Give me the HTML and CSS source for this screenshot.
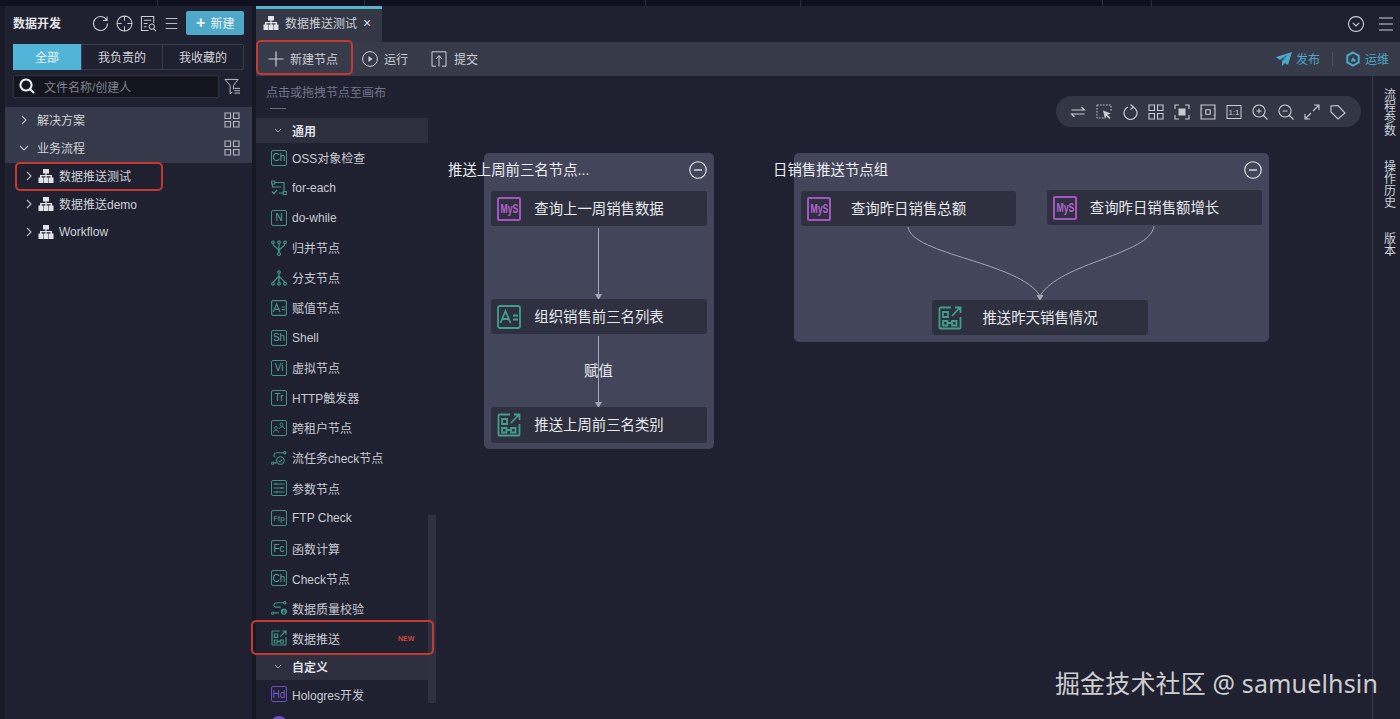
FILE: index.html
```html
<!DOCTYPE html>
<html lang="en">
<head>
  <meta charset="UTF-8" />
  <title>数据开发</title>
  <link rel="stylesheet" href="styles.css">
</head>
<body>

  <svg class="defs" width="0" height="0">
    <symbol id="i-flow" viewBox="0 0 16 16">
      <path fill="currentColor" d="M5 1h6v4.500H8.600V7H14v2.500h1.500V15h-5V9.500h2V8.300H8.600v1.200H10V15H6V9.500h1.400V8.300H3.500v1.200h2V15h-5V9.500H2V7h5.400V5.500H5z"/>
    </symbol>
    <symbol id="i-grid" viewBox="0 0 16 16">
      <path fill="none" stroke="currentColor" stroke-width="1.100" d="M1 1h5.500v5.500H1zM9.500 1H15v5.500H9.500zM1 9.500h5.500V15H1zM9.500 9.500H15V15H9.500z"/>
    </symbol>
    <symbol id="i-chev" viewBox="0 0 8 12">
      <path fill="none" stroke="currentColor" stroke-width="1.100" d="M2 2l4 4-4 4"/>
    </symbol>
    <symbol id="i-push" viewBox="0 0 24 24">
      <path fill="none" stroke="currentColor" stroke-width="1.800" d="M13 1.500H2.500a1 1 0 0 0-1 1v19a1 1 0 0 0 1 1h19a1 1 0 0 0 1-1V11M14 10l8-8.500M17 1.500h5.500V7M5 6h5v5H5zM5 15h4.500v4.500H5zM14 15h4.500v4.500H14zM9.500 17H14"/>
    </symbol>
    <symbol id="i-assign" viewBox="0 0 24 24">
      <rect x="1" y="1" width="22" height="22" rx="2" fill="none" stroke="currentColor" stroke-width="1.800"/>
      <path fill="none" stroke="currentColor" stroke-width="1.800" d="M3.500 18L8.500 6l5 12M5.200 14h6.600M16 10.500h5M16 14.500h5"/>
    </symbol>
    <symbol id="i-foreach" viewBox="0 0 16 16">
      <path fill="none" stroke="currentColor" stroke-width="1.200" d="M.7 1h3v3h-3zM12.300 11.500h3v3h-3zM3.700 2.500H13v9M1.500 4v3h8.500M1 11.500l2 2 3-3.500M8 13h4.300"/>
    </symbol>
    <symbol id="i-merge" viewBox="0 0 16 16">
      <path fill="none" stroke="currentColor" stroke-width="1.200" d="M2 1a1.300 1.300 0 1 0 .01 0M8 1a1.300 1.300 0 1 0 .01 0M14 1a1.300 1.300 0 1 0 .01 0M8 12.500a1.500 1.500 0 1 0 .01 0M2 3.600c0 4 6 3 6 8.900M14 3.600c0 4-6 3-6 8.900M8 3.600v8.900"/>
    </symbol>
    <symbol id="i-branch" viewBox="0 0 16 16">
      <path fill="none" stroke="currentColor" stroke-width="1.200" d="M8 .8a1.300 1.300 0 1 0 .01 0M2 12.300a1.400 1.400 0 1 0 .01 0M8 12.300a1.400 1.400 0 1 0 .01 0M14 12.300a1.400 1.400 0 1 0 .01 0M8 3.400v8.900M8 6L2 12.300M8 6l6 6.300"/>
    </symbol>
    <symbol id="i-tenant" viewBox="0 0 16 16">
      <rect x=".5" y=".5" width="15" height="15" rx="1.500" fill="none" stroke="currentColor"/>
      <path fill="none" stroke="currentColor" d="M5 6.500a1.500 1.500 0 1 0 .01 0M2.500 12.500c0-3 5-3 5 0M10.500 3a1.500 1.500 0 1 0 .01 0M8.500 9c0-3 5-3 5 0"/>
    </symbol>
    <symbol id="i-check" viewBox="0 0 18 16">
      <path fill="none" stroke="currentColor" stroke-width="1.200" d="M2 12.500a1.300 1.300 0 1 0 .01 0M15.500 .8a1.300 1.300 0 1 0 .01 0M3.300 13.500H6M14 2.100H7C3 2.100 2 6 5 7M10.500 6.500a4.300 4.300 0 1 0 .01 0M8.500 10.800l1.500 1.500 2.500-2.500"/>
    </symbol>
    <symbol id="i-params" viewBox="0 0 16 16">
      <rect x=".5" y=".5" width="15" height="15" rx="1.500" fill="none" stroke="currentColor"/>
      <path fill="none" stroke="currentColor" d="M2.500 4h11M2.500 8h11M2.500 12h11M5 2.800v2.400M10.500 6.800v2.400M6 10.800v2.400"/>
    </symbol>
    <symbol id="i-quality" viewBox="0 0 18 16">
      <path fill="none" stroke="currentColor" stroke-width="1.200" d="M2 12.500a1.300 1.300 0 1 0 .01 0M15.500 .8a1.300 1.300 0 1 0 .01 0M3.300 13.500H9M14 2.100H7C3 2.100 2 6 5 7h6"/>
      <circle cx="14.500" cy="12" r="3.500" fill="currentColor"/>
      <path fill="none" stroke="#1f2130" d="M14.500 10v4M13 12.500l1.500 1.500 1.500-1.500"/>
    </symbol>
  </svg>

  <div class="top-strip">
    <span class="strip-cell w157"></span>
    <span class="strip-cell w207"></span>
    <span class="strip-cell w281"></span>
    <span class="strip-cell w155"></span>
    <span class="strip-cell w302"></span>
    <span class="strip-cell w49"></span>
  </div>

  <div class="app">
    <aside class="sidebar">
      <div class="side-head">
        <span class="side-title">数据开发</span>
        <div class="side-tools">
          <svg class="tool-18" viewBox="0 0 18 18"><path fill="none" stroke="currentColor" stroke-width="1.100" d="M15.500 5.500A7.400 7.400 0 1 0 16.400 9M16 1.500v4.300h-4.300"/></svg>
          <svg class="tool-18" viewBox="0 0 18 18"><path fill="none" stroke="currentColor" stroke-width="1.100" d="M9 1.200a7.800 7.800 0 1 0 .01 0M9 1v5M9 12v5M1 9h5M12 9h5"/></svg>
          <svg class="tool-18" viewBox="0 0 18 18"><path fill="none" stroke="currentColor" stroke-width="1.100" d="M9 16.500H1.500v-15h13v7M4 5.500h8M4 9h4M4 12.500h3M12.500 9.500a2.800 2.800 0 1 0 .01 0M14.500 14.500l2.500 2.500"/></svg>
          <svg class="tool-18 menu-ico" viewBox="0 0 18 18"><path fill="none" stroke="currentColor" stroke-width="1.100" d="M2 3h14M2 9h14M2 15h14"/></svg>
        </div>
        <button class="new-btn"><span class="plus">+</span>新建</button>
      </div>

      <div class="seg-tabs">
        <div class="seg seg-active">全部</div>
        <div class="seg">我负责的</div>
        <div class="seg">我收藏的</div>
      </div>

      <div class="search-row">
        <div class="search-box">
          <svg class="search-ico" viewBox="0 0 16 16"><path fill="none" stroke="currentColor" stroke-width="2" d="M7 1.500a5.500 5.500 0 1 0 .01 0M11 11l4 4"/></svg>
          <span>文件名称/创建人</span>
        </div>
        <svg class="filter-ico" viewBox="0 0 18 18"><path fill="none" stroke="currentColor" stroke-width="1" d="M1 1.500h14L10 8v4M1 1.500L6.500 8v8.500L9 15M11 11h6M11 13.500h6M11 16h6"/></svg>
      </div>

      <div class="tree">
        <div class="tree-group">
          <div class="tree-row">
            <svg class="chev"><use href="#i-chev"/></svg>
            <span class="tree-label">解决方案</span>
            <svg class="grid-ico"><use href="#i-grid"/></svg>
          </div>
          <div class="tree-row">
            <svg class="chev chev-down"><use href="#i-chev"/></svg>
            <span class="tree-label">业务流程</span>
            <svg class="grid-ico"><use href="#i-grid"/></svg>
          </div>
        </div>
        <div class="tree-row tree-child"><svg class="chev"><use href="#i-chev"/></svg><svg class="flow-ico"><use href="#i-flow"/></svg><span>数据推送测试</span></div>
        <div class="tree-row tree-child"><svg class="chev"><use href="#i-chev"/></svg><svg class="flow-ico"><use href="#i-flow"/></svg><span>数据推送demo</span></div>
        <div class="tree-row tree-child"><svg class="chev"><use href="#i-chev"/></svg><svg class="flow-ico"><use href="#i-flow"/></svg><span>Workflow</span></div>
      </div>
    </aside>

    <main class="main">
      <div class="tab-bar">
        <div class="tab">
          <svg class="flow-ico"><use href="#i-flow"/></svg>
          <span>数据推送测试</span>
          <span class="tab-close">×</span>
        </div>
        <div class="tab-right">
          <svg class="tool-16" viewBox="0 0 16 16"><path fill="none" stroke="currentColor" stroke-width="1.100" d="M8 .6a7.400 7.400 0 1 0 .01 0M4.800 6.800L8 10l3.200-3.200"/></svg>
          <svg class="tool-16" viewBox="0 0 16 16"><path fill="none" stroke="currentColor" stroke-width="1.100" d="M1 2h14M1 8h14M1 14h14"/></svg>
        </div>
      </div>

      <div class="toolbar">
        <div class="tool-item first">
          <svg class="tool-16" viewBox="0 0 16 16"><path fill="none" stroke="currentColor" stroke-width="1.200" d="M8 .5v15M.5 8h15"/></svg>
          <span>新建节点</span>
        </div>
        <div class="tool-item">
          <svg class="tool-16" viewBox="0 0 16 16"><circle cx="8" cy="8" r="7.400" fill="none" stroke="currentColor"/><path fill="currentColor" d="M6.500 5l4 3-4 3z"/></svg>
          <span>运行</span>
        </div>
        <div class="tool-item">
          <svg class="tool-16" viewBox="0 0 16 16"><path fill="none" stroke="currentColor" d="M5 15.200H1V.8h14v14.400h-4M8 15.500V5M5 8l3-3.500L11 8"/></svg>
          <span class="submit-label">提交</span>
        </div>
        <div class="tool-right">
          <div class="tool-link">
            <svg class="tool-16" viewBox="0 0 16 16"><path fill="currentColor" d="M16 1L0 6l4 3 7.500-5L6 10v5l3-3 3 2z"/></svg>
            <span>发布</span>
          </div>
          <span class="tool-sep"></span>
          <div class="tool-link">
            <svg class="tool-16" viewBox="0 0 16 16"><path fill="none" stroke="currentColor" stroke-width="2" d="M8 1.500l5.700 3.200v6.600L8 14.500l-5.700-3.200V4.700z"/><path fill="currentColor" d="M5.500 10.500L8 6l1 2 1.500.5v2z"/></svg>
            <span>运维</span>
          </div>
        </div>
      </div>

      <div class="workspace">
        <section class="palette">
          <div class="palette-hint">点击或拖拽节点至画布</div>
          <div class="palette-stub"></div>

          <div class="pal-section"><svg class="chev chev-down"><use href="#i-chev"/></svg>通用</div>
          <div class="pal-item"><span class="badge">Ch</span>OSS对象检查</div>
          <div class="pal-item"><svg class="pal-ico"><use href="#i-foreach"/></svg>for-each</div>
          <div class="pal-item"><span class="badge">N</span>do-while</div>
          <div class="pal-item"><svg class="pal-ico"><use href="#i-merge"/></svg>归并节点</div>
          <div class="pal-item"><svg class="pal-ico"><use href="#i-branch"/></svg>分支节点</div>
          <div class="pal-item"><svg class="pal-ico"><use href="#i-assign"/></svg>赋值节点</div>
          <div class="pal-item"><span class="badge">Sh</span>Shell</div>
          <div class="pal-item"><span class="badge">Vi</span>虚拟节点</div>
          <div class="pal-item"><span class="badge">Tr</span>HTTP触发器</div>
          <div class="pal-item"><svg class="pal-ico"><use href="#i-tenant"/></svg>跨租户节点</div>
          <div class="pal-item"><svg class="pal-ico"><use href="#i-check"/></svg>流任务check节点</div>
          <div class="pal-item"><svg class="pal-ico"><use href="#i-params"/></svg>参数节点</div>
          <div class="pal-item"><span class="badge badge-sm">Ftp</span>FTP Check</div>
          <div class="pal-item"><span class="badge">Fc</span>函数计算</div>
          <div class="pal-item"><span class="badge">Ch</span>Check节点</div>
          <div class="pal-item"><svg class="pal-ico"><use href="#i-quality"/></svg>数据质量校验</div>
          <div class="pal-item"><svg class="pal-ico"><use href="#i-push"/></svg>数据推送<span class="new-tag">NEW</span></div>

          <div class="pal-section pal-custom"><svg class="chev chev-down"><use href="#i-chev"/></svg>自定义</div>
          <div class="pal-item"><span class="badge badge-purple">Hd</span>Hologres开发</div>
          <div class="pal-item"><span class="dot-purple"></span></div>

          <div class="palette-scroll"></div>
        </section>

        <section class="canvas">
          <div class="canvas-tools">
            <svg viewBox="0 0 16 16"><path fill="none" stroke="currentColor" stroke-width="1.100" d="M1.500 6h13l-3-3M14.500 10h-13l3 3"/></svg>
            <svg viewBox="0 0 16 16"><path fill="none" stroke="currentColor" stroke-dasharray="1.600 1.400" d="M1 1h14v7M1 1v13h7"/><path fill="currentColor" d="M7 6.500l8 3-3.500 1.200 3 3-1.300 1.300-3-3L9 15.500z"/></svg>
            <svg viewBox="0 0 16 16"><path fill="none" stroke="currentColor" stroke-width="1.200" d="M11 3a6.500 6.500 0 1 1-5 0M8.500.5L11.500 3 8.500 5.500"/></svg>
            <svg viewBox="0 0 16 16"><use href="#i-grid"/></svg>
            <svg viewBox="0 0 16 16"><path fill="none" stroke="currentColor" stroke-width="1.100" d="M1 5V1h4M11 1h4v4M15 11v4h-4M5 15H1v-4"/><rect x="4.500" y="4.500" width="7" height="7" fill="currentColor"/></svg>
            <svg viewBox="0 0 16 16"><path fill="none" stroke="currentColor" stroke-width="1.100" d="M1 1h14v14H1zM1 5h1.500M13.500 5H15M1 11h1.500M13.500 11H15M5.800 5.800h4.400v4.400H5.800z"/></svg>
            <svg viewBox="0 0 16 16"><rect x="1" y="1.500" width="14" height="13" fill="none" stroke="currentColor"/><text class="ratio-text" x="8" y="11" text-anchor="middle">1:1</text></svg>
            <svg viewBox="0 0 16 16"><path fill="none" stroke="currentColor" stroke-width="1.100" d="M7 1a6 6 0 1 0 .01 0M11.500 11.500L15.500 15.500M4.500 7h5M7 4.500v5"/></svg>
            <svg viewBox="0 0 16 16"><path fill="none" stroke="currentColor" stroke-width="1.100" d="M7 1a6 6 0 1 0 .01 0M11.500 11.500L15.500 15.500M4.500 7h5"/></svg>
            <svg viewBox="0 0 16 16"><path fill="none" stroke="currentColor" stroke-width="1.100" d="M9 7l6-6M10 1h5v5M7 9l-6 6M1 10v5h5"/></svg>
            <svg viewBox="0 0 16 16"><path fill="none" stroke="currentColor" stroke-width="1.100" d="M1 2v6l7 7 7-6-7-7.500zM4.500 4.500h.01"/></svg>
          </div>

          <div class="group group-a">
            <div class="group-title title-a">推送上周前三名节点...</div>
            <svg class="collapse" viewBox="0 0 18 18"><circle cx="9" cy="9" r="8.200" fill="none" stroke="currentColor" stroke-width="1.100"/><path stroke="currentColor" stroke-width="1.300" d="M5 9h8"/></svg>
            <svg class="edges" width="230" height="296">
              <path class="edge" d="M114.500 75V142M114.500 183V250"/>
              <path class="arrow" d="M111 141h7l-3.500 6zM111 249h7l-3.500 6z"/>
            </svg>
            <div class="node na1"><span class="node-badge"><span class="mys">MyS</span></span>查询上一周销售数据</div>
            <div class="node na2"><svg class="node-ico"><use href="#i-assign"/></svg>组织销售前三名列表</div>
            <div class="edge-label">赋值</div>
            <div class="node na3"><svg class="node-ico"><use href="#i-push"/></svg>推送上周前三名类别</div>
          </div>

          <div class="group group-b">
            <div class="group-title title-b">日销售推送节点组</div>
            <svg class="collapse" viewBox="0 0 18 18"><circle cx="9" cy="9" r="8.200" fill="none" stroke="currentColor" stroke-width="1.100"/><path stroke="currentColor" stroke-width="1.300" d="M5 9h8"/></svg>
            <svg class="edges" width="475" height="189">
              <path class="edge" d="M114 74C118 102 226 109 246 143M360 73C356 102 266 109 246 143"/>
              <path class="arrow" d="M242.500 142h7l-3.500 6z"/>
            </svg>
            <div class="node nb1"><span class="node-badge"><span class="mys">MyS</span></span>查询昨日销售总额</div>
            <div class="node nb2"><span class="node-badge"><span class="mys">MyS</span></span>查询昨日销售额增长</div>
            <div class="node nb3"><svg class="node-ico"><use href="#i-push"/></svg>推送昨天销售情况</div>
          </div>
        </section>

        <aside class="side-rail">
          <span>流程参数</span>
          <span>操作历史</span>
          <span>版本</span>
        </aside>
      </div>
    </main>
  </div>

  <!-- red marks drawn on top of the screenshot -->
  <div class="mark mark-tree"></div>
  <div class="mark mark-new"></div>
  <div class="mark mark-push"></div>
  <div class="watermark">掘金技术社区 @ samuelhsin</div>

</body>
</html>
```

FILE: styles.css
```css
* {
  box-sizing: border-box;
}

html, body {
  margin: 0;
  padding: 0;
  height: 719px;
  overflow: hidden;
}

body {
  position: relative;
  background: #1f2130;
  color: #d5d7de;
  font-family: "Liberation Sans", "Noto Sans CJK SC", sans-serif;
  font-size: 12px;
}

.defs {
  position: absolute;
}

svg {
  display: block;
  flex: none;
}

.top-strip {
  display: flex;
  height: 6px;
  background: #0f1120;
}

.strip-cell {
  border-right: 1px solid #2c2e3c;
}

.w157 { width: 158px; }
.w207 { width: 207px; }
.w281 { width: 281px; }
.w155 { width: 155px; }
.w302 { width: 302px; }
.w49 { width: 49px; }

.app {
  display: flex;
  height: 713px;
}

/* left file tree */
.sidebar {
  width: 256px;
  flex: none;
  background: #1f2130;
  border-left: 5px solid #181a28;
  border-right: 4px solid #161824;
}

.side-head {
  display: flex;
  align-items: center;
  height: 34px;
  padding: 0 8px;
}

.side-title {
  width: 80px;
  padding-bottom: 2px;
  font-weight: bold;
  font-size: 12px;
  color: #e3e4ea;
}

.side-tools {
  display: flex;
  gap: 7px;
  color: #c9cbd3;
}

.tool-18 {
  width: 17px;
  height: 17px;
}

.menu-ico {
  width: 15px;
}

.new-btn {
  display: flex;
  align-items: center;
  justify-content: center;
  gap: 5px;
  width: 58px;
  height: 24px;
  margin-left: 7px;
  padding: 0 0 1px;
  border: none;
  border-radius: 2px;
  background: #4fa8c7;
  color: #ecf5f8;
  font: inherit;
}

.plus {
  font-size: 16px;
  font-weight: bold;
  line-height: 16px;
}

.seg-tabs {
  display: flex;
  height: 26px;
  margin: 4px 8px 0;
  border: 1px solid #393c4b;
  border-radius: 2px;
}

.seg {
  flex: 1;
  display: flex;
  align-items: center;
  justify-content: center;
  padding-bottom: 2px;
  border-left: 1px solid #393c4b;
  color: #d4d6dc;
}

.seg-active {
  flex: none;
  width: 68px;
  margin: -1px 0 -1px -1px;
  border: none;
  background: #52b4d6;
  color: #eaf6fa;
}

.search-row {
  display: flex;
  align-items: center;
  margin: 5px 8px 0;
}

.search-box {
  display: flex;
  align-items: center;
  width: 206px;
  height: 23px;
  padding: 0 0 1px 5px;
  border: 1px solid #30323f;
  border-radius: 2px;
  background: #14151f;
  color: #7f828e;
}

.search-ico {
  width: 16px;
  height: 16px;
  margin-right: 9px;
  color: #eceef2;
}

.filter-ico {
  width: 17px;
  height: 17px;
  margin-left: 5px;
  color: #c4c6ce;
}

.tree {
  margin-top: 9px;
}

.tree-group {
  background: #363949;
}

.tree-row {
  display: flex;
  align-items: center;
  height: 28px;
  padding: 0 0 3px 15px;
  color: #cfd1d8;
}

.tree-label {
  margin-left: 9px;
  flex: 1;
}

.chev {
  width: 8px;
  height: 12px;
  color: #b9bbc4;
}

.chev-down {
  transform: rotate(90deg);
}

.grid-ico {
  width: 16px;
  height: 16px;
  margin-right: 12px;
  color: #b4b6c0;
}

.tree-child {
  padding-left: 20px;
}

.tree-child .chev {
  margin-right: 5px;
}

.flow-ico {
  width: 16px;
  height: 16px;
  margin-right: 5px;
  color: #e2e4e9;
}

/* main column */
.main {
  flex: 1;
  display: flex;
  flex-direction: column;
  min-width: 0;
}

.tab-bar {
  display: flex;
  align-items: stretch;
  justify-content: space-between;
  height: 36px;
}

.tab {
  display: flex;
  align-items: center;
  width: 126px;
  padding: 0 0 6px 7px;
  border-top: 3px solid #54b4cf;
  background: #343745;
  color: #cdd0d7;
}

.tab .flow-ico {
  margin-right: 6px;
}

.tab-close {
  margin-left: 6px;
  font-size: 14px;
  color: #d8dae0;
}

.tab-right {
  display: flex;
  align-items: center;
  gap: 14px;
  padding-right: 6px;
  color: #c9cbd3;
}

.toolbar {
  display: flex;
  align-items: center;
  height: 34px;
  padding: 0 0 1px 12px;
  background: #373a49;
  color: #cdd0d7;
}

.tool-16 {
  width: 16px;
  height: 16px;
}

.tool-item {
  display: flex;
  align-items: center;
  gap: 6px;
  margin-right: 23px;
}

.tool-item.first {
  margin-right: 24px;
}

.submit-label {
  margin-left: 1px;
}

.tool-right {
  display: flex;
  align-items: center;
  margin-left: auto;
  padding-right: 11px;
  color: #4aa8c8;
}

.tool-link {
  display: flex;
  align-items: center;
  gap: 4px;
}

.tool-sep {
  width: 1px;
  height: 14px;
  margin: 0 12px;
  background: #4b4e5c;
}

.workspace {
  position: relative;
  flex: 1;
  display: flex;
  min-height: 0;
}

/* node palette */
.palette {
  position: relative;
  width: 180px;
  flex: none;
  overflow: hidden;
}

.palette-hint {
  height: 30px;
  padding: 7px 0 0 10px;
  color: #73768a;
}

.palette-stub {
  width: 16px;
  height: 10px;
  margin: 2px 0 0 14px;
  border-top: 1px solid #686b78;
}

.pal-section {
  display: flex;
  align-items: center;
  gap: 11px;
  width: 172px;
  height: 25px;
  padding: 0 0 1px 19px;
  background: #2d2f3e;
  color: #dcdee3;
  font-weight: bold;
}

.pal-custom {
  margin-top: 1px;
}

.pal-section .chev {
  width: 6px;
  height: 9px;
}

.pal-item {
  display: flex;
  align-items: center;
  height: 30.06px;
  padding: 0 0 1px 15px;
  color: #c8cad2;
}

.badge {
  display: flex;
  align-items: center;
  justify-content: center;
  width: 16px;
  height: 16px;
  margin-right: 5px;
  border: 1px solid #3f9484;
  border-radius: 2px;
  color: #54a797;
  font-size: 10px;
}

.badge-sm {
  font-size: 8px;
}

.badge-purple {
  border-color: #6a4fc0;
  color: #7a5fcf;
}

.pal-ico {
  width: 16px;
  height: 16px;
  margin-right: 5px;
  color: #3f9484;
}

.dot-purple {
  width: 16px;
  height: 16px;
  border-radius: 50%;
  background: #6a4fc0;
}

.new-tag {
  margin-left: 58px;
  color: #c8493d;
  font-size: 7px;
  font-weight: bold;
}

.palette-scroll {
  position: absolute;
  left: 172px;
  top: 439px;
  width: 8px;
  height: 188px;
  background: #2f3140;
}

/* flow canvas */
.canvas {
  position: relative;
  flex: 1;
  min-width: 0;
}

.canvas-tools {
  position: absolute;
  left: 620px;
  top: 20px;
  display: flex;
  align-items: center;
  gap: 10px;
  width: 305px;
  height: 31px;
  padding-left: 14px;
  border-radius: 16px;
  background: #333644;
  color: #c9cbd3;
}

.canvas-tools svg {
  width: 16px;
  height: 16px;
}

.ratio-text {
  fill: currentColor;
  font-size: 8px;
}

.group {
  position: absolute;
  top: 77px;
  border-radius: 5px;
  background: #43465a;
}

.group-a {
  left: 48px;
  width: 230px;
  height: 296px;
}

.group-b {
  left: 358px;
  width: 475px;
  height: 189px;
}

.group-title {
  position: absolute;
  top: 5px;
  color: #eceef2;
  font-size: 14.4px;
  white-space: nowrap;
}

.title-a { left: -36px; }
.title-b { left: -21px; }

.collapse {
  position: absolute;
  right: 7px;
  top: 8px;
  width: 18px;
  height: 18px;
  color: #eceef2;
}

.edges {
  position: absolute;
  left: 0;
  top: 0;
}

.edge {
  fill: none;
  stroke: #a4a7b3;
  stroke-width: 1;
}

.arrow {
  fill: #a4a7b3;
}

.node {
  position: absolute;
  display: flex;
  align-items: center;
  justify-content: center;
  width: 216px;
  height: 35px;
  padding-bottom: 3px;
  border-radius: 3px;
  background: #2e303f;
  color: #e6e8ec;
  font-size: 14.4px;
}

.na1 { left: 7px; top: 38px; }
.na2 { left: 7px; top: 146px; }
.na3 { left: 7px; top: 254px; height: 36px; }
.nb1 { left: 7px; top: 38px; width: 215px; }
.nb2 { left: 253px; top: 37px; width: 215px; }
.nb3 { left: 138px; top: 147px; }

.node-badge,
.node-ico {
  position: absolute;
  left: 6px;
  top: 6px;
  width: 24px;
  height: 24px;
}

.node-badge {
  display: flex;
  align-items: center;
  justify-content: center;
  border: 2px solid #a455c0;
  border-radius: 2px;
  color: #b565d0;
  font-size: 12px;
  font-weight: bold;
}

.mys {
  transform: scaleX(0.72);
  white-space: nowrap;
}

.node-ico {
  color: #429d8b;
}

.edge-label {
  position: absolute;
  left: 100px;
  top: 206px;
  color: #e6e8ec;
  font-size: 14.4px;
}

.side-rail {
  display: flex;
  flex-direction: column;
  gap: 24px;
  width: 28px;
  flex: none;
  padding-top: 12px;
  border-left: 1px solid #393c4b;
  color: #d0d2d9;
}

/* one character per line */
.side-rail span {
  width: 12px;
  margin-left: 11px;
  line-height: 12px;
  font-family: "Noto Sans CJK SC", sans-serif;
}

/* annotations over the screenshot */
.mark {
  position: absolute;
  border: 2px solid #c23a30;
  border-radius: 5px;
}

.mark-tree {
  left: 15px;
  top: 162px;
  width: 148px;
  height: 29px;
}

.mark-new {
  left: 256px;
  top: 40px;
  width: 97px;
  height: 35px;
}

.mark-push {
  left: 251px;
  top: 620px;
  width: 183px;
  height: 35px;
}

.watermark {
  position: absolute;
  right: 22px;
  top: 664px;
  color: rgba(255, 255, 255, 0.78);
  font-family: "Noto Sans", "Noto Sans CJK SC", sans-serif;
  font-size: 25px;
  letter-spacing: 0.15px;
  white-space: nowrap;
}
```
